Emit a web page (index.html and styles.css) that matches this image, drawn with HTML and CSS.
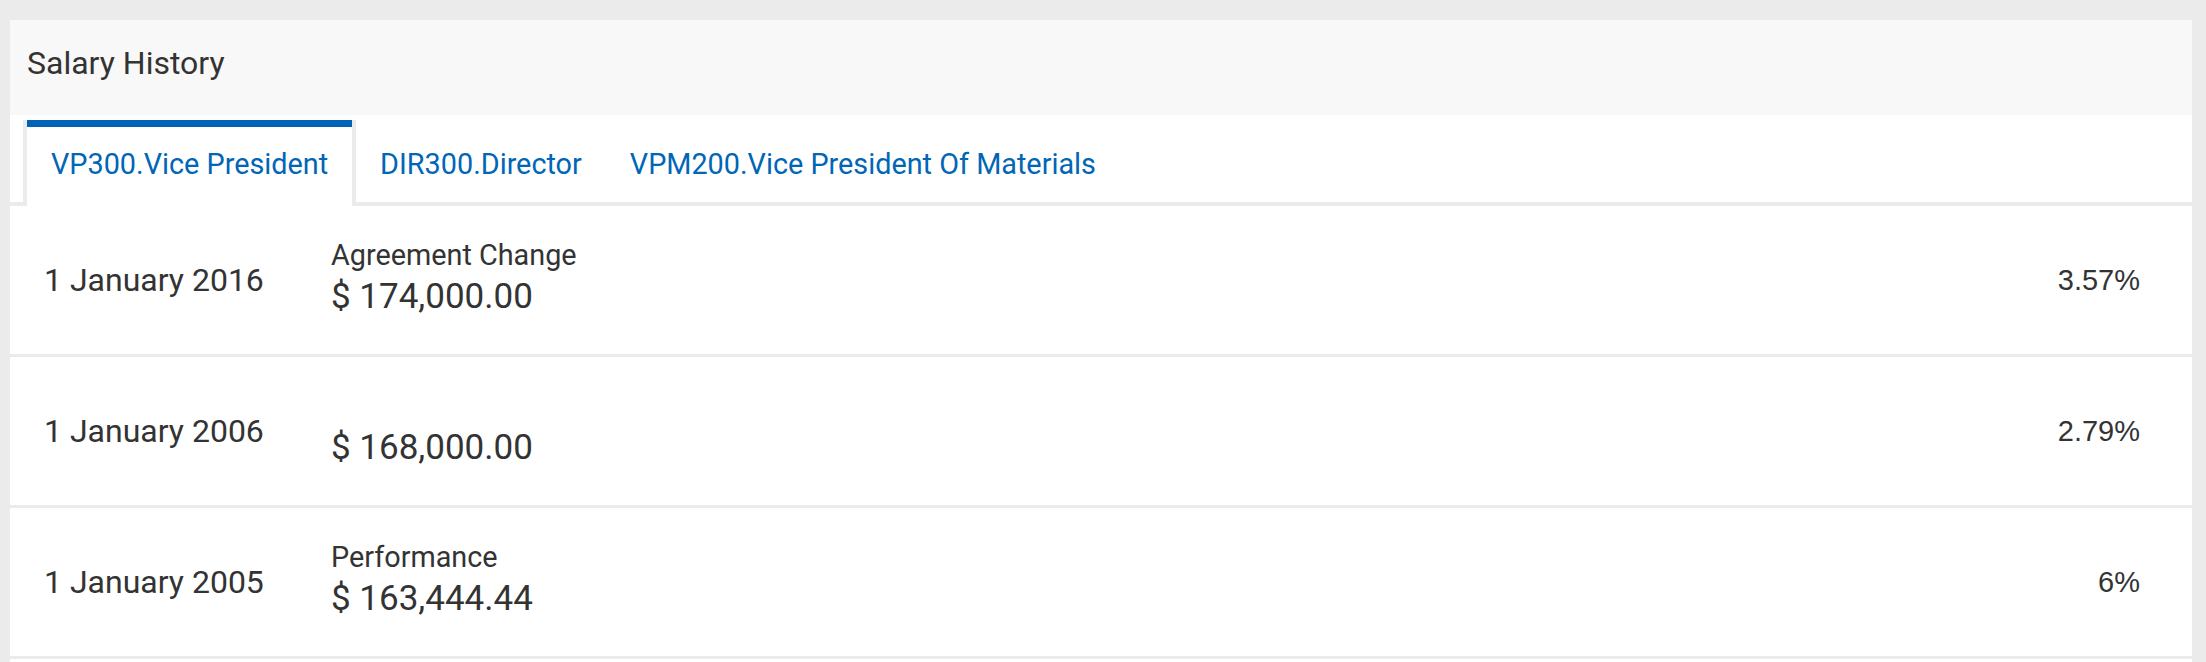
FILE: index.html
```html
<!DOCTYPE html>
<html lang="en">
<head>
<meta charset="utf-8">
<title>Salary History</title>
<link rel="stylesheet" href="styles.css">
</head>
<body>
<section class="card">
  <header class="card-header">Salary History</header>
  <nav class="tabs">
    <div class="tab active">VP300.Vice President</div>
    <div class="tab">DIR300.Director</div>
    <div class="tab">VPM200.Vice President Of Materials</div>
  </nav>
  <div class="rows">
    <div class="row">
      <div class="date">1 January 2016</div>
      <div class="detail">
        <div class="label">Agreement Change</div>
        <div class="amount">$ 174,000.00</div>
      </div>
      <div class="pct">3.57%</div>
    </div>
    <div class="row">
      <div class="date">1 January 2006</div>
      <div class="detail">
        <div class="label"></div>
        <div class="amount">$ 168,000.00</div>
      </div>
      <div class="pct">2.79%</div>
    </div>
    <div class="row">
      <div class="date">1 January 2005</div>
      <div class="detail">
        <div class="label">Performance</div>
        <div class="amount">$ 163,444.44</div>
      </div>
      <div class="pct">6%</div>
    </div>
  </div>
</section>
</body>
</html>
```
FILE: styles.css
```css
html, body {
  background: #ebebeb;
}
body {
  margin: 20px 14px 0 10px;
  font-family: Roboto, "Noto Sans", sans-serif;
  color: #333333;
}
.card {
  background: #ffffff;
  padding-bottom: 30px;
}
.card-header {
  background: #f8f8f8;
  height: 95px;
  box-sizing: border-box;
  padding: 23px 17px 0 17px;
  font-size: 32px;
  line-height: 40px;
}
.tabs {
  display: flex;
  padding: 5px 0 0 13px;
  border-bottom: 4px solid #ebebeb;
}
.tab {
  font-size: 28.8px;
  line-height: 34px;
  color: #0066b5;
  padding: 27px 24px 25px 24px;
  margin-bottom: -4px;
}
.tab.active {
  background: #ffffff;
  border-left: 4px solid #ebebeb;
  border-right: 4px solid #ebebeb;
  box-shadow: inset 0 7px 0 #0063b8;
}
.row {
  display: grid;
  grid-template-columns: 287px 1fr auto;
  align-items: center;
  height: 148px;
  padding: 0 52px 0 34px;
  border-bottom: 3px solid #ebebeb;
}
.date {
  font-size: 32px;
  line-height: 40px;
}
.label {
  font-size: 28.8px;
  line-height: 34px;
  height: 34px;
}
.amount {
  font-size: 35px;
  line-height: 50px;
}
.pct {
  font-family: "Liberation Sans", Arial, sans-serif;
  font-size: 29px;
  line-height: 40px;
}
```
